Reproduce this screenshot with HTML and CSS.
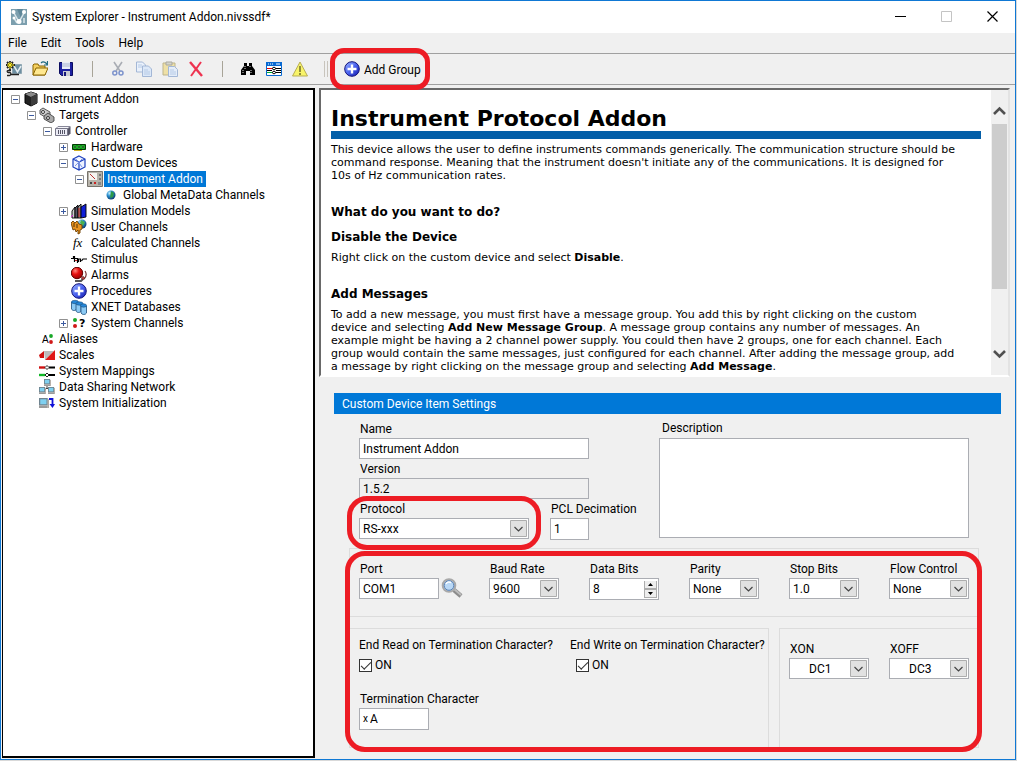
FILE: index.html
```html
<!DOCTYPE html>
<html lang="en">
<head>
<meta charset="utf-8">
<title>System Explorer</title>
<link rel="stylesheet" href="styles.css">
</head>
<body>
<svg class="defs" aria-hidden="true">
  <defs>
    <linearGradient id="gBlue" x1="0" y1="0" x2="1" y2="1"><stop offset="0" stop-color="#9db8ff"/><stop offset=".5" stop-color="#4a63f0"/><stop offset="1" stop-color="#1418a8"/></linearGradient>
    <radialGradient id="gRed" cx=".35" cy=".3" r=".8"><stop offset="0" stop-color="#ff8a80"/><stop offset=".4" stop-color="#e81010"/><stop offset="1" stop-color="#8a0000"/></radialGradient>
    <radialGradient id="gGlobe" cx=".35" cy=".3" r=".8"><stop offset="0" stop-color="#c8f4ff"/><stop offset=".4" stop-color="#2a8fd0"/><stop offset="1" stop-color="#06305c"/></radialGradient>
    <symbol id="plusball" viewBox="0 0 16 16"><circle cx="8" cy="8" r="7.3" fill="url(#gBlue)" stroke="#10107a"/><path d="M8 3.500v9M3.500 8h9" stroke="#fff" stroke-width="2.400"/></symbol>
    <symbol id="minus" viewBox="0 0 9 9"><path d="M.5.5h8v8h-8z" fill="#fff" stroke="#919191"/><path d="M2 4.500h5" stroke="#3c5aa0"/></symbol>
    <symbol id="plus" viewBox="0 0 9 9"><path d="M.5.5h8v8h-8z" fill="#fff" stroke="#919191"/><path d="M2 4.500h5M4.500 2v5" stroke="#3c5aa0"/></symbol>
    <symbol id="down" viewBox="0 0 17 17"><path d="M.5.5h16v16h-16z" fill="#e1e1e1" stroke="#adadad"/><path d="M4.500 7l4 4 4-4" fill="none" stroke="#444" stroke-width="1.200"/></symbol>
    <symbol id="pc" viewBox="0 0 8 8"><path d="M0 0h7v6H0z" fill="#6f8490"/><path d="M1 1h5v4H1z" fill="#7fd0f0"/><path d="M0 6h7v2H0z" fill="#9a9a9a"/><path d="M7 1h1v7H7z" fill="#b0a8a0"/></symbol>
  </defs>
</svg>

<main class="window">
  <header class="titlebar">
    <svg class="i16" viewBox="0 0 16 16"><path d="M0 0h16v16H0z" fill="#5f8799"/><path d="M0 0h6l4 9 2-9h4v16H0z" fill="#7c9fae"/><path d="M3 4l5 9 5-9M3 9l3 5M13 9v5" fill="none" stroke="#dbe7ec" stroke-width="1.500"/><g fill="#fff"><circle cx="2.500" cy="3" r="2"/><circle cx="13" cy="3" r="2"/><circle cx="8" cy="12.500" r="2.500"/><circle cx="3" cy="9" r="1.500"/></g></svg>
    <h1 class="title">System Explorer - Instrument Addon.nivssdf*</h1>
    <button class="wbtn" aria-label="Minimize"><svg viewBox="0 0 11 11"><path d="M0 5.500h11" stroke="#000"/></svg></button>
    <button class="wbtn" aria-label="Maximize" disabled><svg viewBox="0 0 11 11"><path d="M.5.5h10v10H.5z" fill="none" stroke="#c4c4c4"/></svg></button>
    <button class="wbtn" aria-label="Close"><svg viewBox="0 0 11 11"><path d="M.5.5l10 10M10.500.5l-10 10" stroke="#000" stroke-width="1.200"/></svg></button>
  </header>

  <nav class="menubar"><button>File</button><button>Edit</button><button>Tools</button><button>Help</button></nav>

  <div class="toolbar" role="toolbar">
    <button class="tool" aria-label="New"><svg class="i16" viewBox="0 0 16 16"><path d="M6.500 3.500h9v9h-9z" fill="#6d8fa2" stroke="#8fa6b2"/><path d="M8 5l3.500 6L15 5" fill="none" stroke="#e4edf2" stroke-width="1.500"/><path d="M4 0v9M0 4h9M1 1l6 6M7 1L1 7" stroke="#222" stroke-width="1.800"/><path d="M4 1v7M1 4h7M2 2l4 4M6 2L2 6" stroke="#ffee20"/><path d="M5 9.500H2.500c-2 0-1.500 2 0 2h1c2 0 1.500 3 0 3H1M5 13.500h8" fill="none" stroke="#222" stroke-width="1.300"/></svg></button>
    <button class="tool" aria-label="Open"><svg class="i16" viewBox="0 0 16 16"><path d="M1 14V4l1-1h4l1 2h6v9z" fill="#f5d060" stroke="#8a6500"/><path d="M1 14l3-7h12l-3 7z" fill="#ffe890" stroke="#8a6500"/><path d="M9 2c2-2 4-1 6 1M15.500 0v4H12" fill="none" stroke="#206a80" stroke-width="1.200"/></svg></button>
    <button class="tool" aria-label="Save"><svg class="i16" viewBox="0 0 16 16"><path d="M1.500 1.500h13v13h-11l-2-2z" fill="#1c20a0" stroke="#0b0c60"/><path d="M4 1h8v7H4z" fill="#e8ecf6"/><path d="M4 3h8M4 5h8" stroke="#a9b4d0"/><path d="M5 10h7v5H5z" fill="#c9ccd4"/><path d="M6 11h2v4H6z" fill="#16187a"/></svg></button>
    <span class="sep"></span>
    <button class="tool" aria-label="Cut" disabled><svg class="i16" viewBox="0 0 16 16"><path d="M4 1l6 9M12 1l-6 9" stroke="#a9adb4" stroke-width="1.600"/><circle cx="4.800" cy="12" r="2" fill="none" stroke="#7d93cc" stroke-width="1.500"/><circle cx="11" cy="12" r="2" fill="none" stroke="#7d93cc" stroke-width="1.500"/></svg></button>
    <button class="tool" aria-label="Copy" disabled><svg class="i16" viewBox="0 0 16 16"><g stroke="#a3b7d6"><path d="M.5 1h6l3 3v7h-9z" fill="#eaf1fb"/><path d="M6.500 5h6l3 3v7.500h-9z" fill="#dce8f8"/><path d="M2 4h4M2 6h4M8 9h4M8 11h6M8 13h6" stroke="#b6cae6"/></g></svg></button>
    <button class="tool" aria-label="Paste" disabled><svg class="i16" viewBox="0 0 16 16"><path d="M1 2h12v12H1z" fill="#eee0a6" stroke="#bdb48c"/><path d="M4 1h6v3H4z" fill="#d4d4cc" stroke="#a9a9a0"/><path d="M6.500 5.500h6l3 3v7h-9z" fill="#e4edf9" stroke="#a3b7d6"/><path d="M8 9h4M8 11h6M8 13h6" stroke="#b6cae6"/></svg></button>
    <button class="tool" aria-label="Delete"><svg class="i16" viewBox="0 0 16 16"><path d="M2 1l12 14" stroke="#ee3350" stroke-width="2.400"/><path d="M13 1L3 15" stroke="#ee3350" stroke-width="2"/></svg></button>
    <span class="sep"></span>
    <button class="tool" aria-label="Find"><svg class="i16" viewBox="0 0 16 16"><path d="M4 2h3v3h2V2h3v3l3 4v5h-5v-4H6v4H1V9l3-4z" fill="#000"/><path d="M3 9v4M5 5v3M11 9v4M10 5v2" stroke="#ddd" stroke-dasharray="1 1"/></svg></button>
    <button class="tool" aria-label="System mappings"><svg class="i16" viewBox="0 0 16 16"><path d="M0 1h16v14H0z" fill="#fff"/><path d="M.5 1.500h15v13H.5z" fill="none" stroke="#0869d2"/><path d="M0 1h16v4H0z" fill="#0869d2"/><path d="M2 3h1M4 3h1M6 3h1M10 3h4" stroke="#fff"/><path d="M1 7.500h5" stroke="#e00000"/><path d="M1 11.500h5" stroke="#00b030"/><path d="M1 9.500h5M10 7.500h5M10 9.500h5M10 11.500h5" stroke="#000"/><path d="M6 7.500l2-1.500 2 1.500L8 9zM6 11.500L8 10l2 1.500L8 13z" fill="#fff" stroke="#000"/></svg></button>
    <button class="tool" aria-label="Warnings"><svg class="i16" viewBox="0 0 16 16"><path d="M8 1l7.500 14H.5z" fill="#f8f46a" stroke="#b8ad55"/><path d="M8 5v6M8 12v2" stroke="#777330" stroke-width="1.600"/></svg></button>
    <span class="grip"></span>
    <button class="addgroup"><svg class="i16"><use href="#plusball"/></svg><span>Add Group</span></button>
  </div>

  <div class="body">
    <aside class="tree">
      <ul role="tree">
        <li class="l0"><svg class="ex"><use href="#minus"/></svg><svg class="i16" viewBox="0 0 16 16"><path d="M8 1l6 2v9l-6 3-6-3V3z" fill="#222" stroke="#000"/><path d="M2 3l6-2 6 2-6 3z" fill="#8a8a8a"/><path d="M8 6l6-3v9l-6 3z" fill="#3c3c3c"/></svg><span>Instrument Addon</span></li>
        <li class="l1"><svg class="ex"><use href="#minus"/></svg><svg class="i16" viewBox="0 0 16 16"><g stroke="#333" stroke-width=".8"><path d="M1 3l3-2 7 4v4l-3 2-7-4z" fill="#ccc"/><path d="M5 9l4-3 6 4v4l-3 2-7-4z" fill="#aaa"/></g><circle cx="4" cy="5" r="1.500" fill="#fff" stroke="#333"/><circle cx="9" cy="11" r="1.500" fill="#eee" stroke="#333"/></svg><span>Targets</span></li>
        <li class="l2"><svg class="ex"><use href="#minus"/></svg><svg class="i16" viewBox="0 0 16 16"><path d="M1 5.500l2-2h12l-2 2z" fill="#f4f4f8" stroke="#889"/><path d="M.5 5.500h12v7H.5z" fill="#ececf6" stroke="#778"/><path d="M13 5.500l2.500-2v7L13 13z" fill="#556"/><path d="M3.500 7v4M5.500 7v4M7.500 7v4M9.500 7v4" stroke="#556"/></svg><span>Controller</span></li>
        <li class="l3"><svg class="ex"><use href="#plus"/></svg><svg class="i16" viewBox="0 0 16 16"><path d="M1.500 5.500h13v5h-13z" fill="#0a9a14" stroke="#023804"/><path d="M3 7h2v2H3zM7 7h2v2H7zM11 7h2v2h-2z" fill="#000" stroke="#58d060" stroke-width=".6"/><path d="M3 11.500h8" stroke="#d0b020"/></svg><span>Hardware</span></li>
        <li class="l3"><svg class="ex"><use href="#minus"/></svg><svg class="i16" viewBox="0 0 16 16"><path d="M8 1l6 3v8l-6 3-6-3V4zM2 4l6 3 6-3M8 7v8" fill="#edf2ff" stroke="#1c3fbe" stroke-width="1.200"/><path d="M5 4l6 8M4 11l7-7" stroke="#7d97e8"/></svg><span>Custom Devices</span></li>
        <li class="l4"><svg class="ex"><use href="#minus"/></svg><svg class="i16" viewBox="0 0 16 16"><path d="M.5.5h15v15H.5z" fill="#b7b3aa" stroke="#77736c"/><path d="M2 2h8v7H2z" fill="#f4f4f0"/><path d="M3 3l5 5" stroke="#b33"/><path d="M12 3h2v2h-2zM12 7h2v2h-2z" fill="#777"/><path d="M3 11h2v2H3z" fill="#444"/><path d="M7 11h2v2H7z" fill="#c22"/><path d="M11 11h3v3h-3z" fill="#888"/></svg><span class="selected">Instrument Addon</span></li>
        <li class="l5"><svg class="i16" viewBox="0 0 16 16"><circle cx="8" cy="8" r="4.500" fill="url(#gGlobe)"/><path d="M8 4l3 2-1 4-3 1z" fill="#2c9a48"/></svg><span>Global MetaData Channels</span></li>
        <li class="l3"><svg class="ex"><use href="#plus"/></svg><svg class="i16" viewBox="0 0 16 16"><g stroke="#000" stroke-width=".9"><path d="M1 15V8l3-4v11z" fill="#ccc"/><path d="M4 15V5l3-3v13z" fill="#556"/><path d="M7 15V4l3-3v14z" fill="#999"/><path d="M10 15V4l5-3v13z" fill="#1020d8"/></g><path d="M8 5v9" stroke="#c81818"/><path d="M0 14l2-2" stroke="#e020e0"/></svg><span>Simulation Models</span></li>
        <li class="l3"><svg class="i16" viewBox="0 0 16 16"><circle cx="11" cy="5" r="4.500" fill="url(#gGlobe)"/><path d="M10 1l4 2-2 4-3-3z" fill="#48b050"/><path d="M0 4l2-2 2 2 2-2 2 3 3 1v4l-2 1v3l-2 1v-4l-2 2-1-3-2 1z" fill="#e89320" stroke="#6e4000" stroke-width=".9"/><path d="M3 4v4M6 5v4" stroke="#553000"/></svg><span>User Channels</span></li>
        <li class="l3"><svg class="i16" viewBox="0 0 16 16"><text class="fx" x="2" y="12">fx</text></svg><span>Calculated Channels</span></li>
        <li class="l3"><svg class="i16" viewBox="0 0 16 16"><path d="M0 7.500h2.500V5M3.500 5v6M4 7.500h2.500V12M7.500 11V8h2v3M10.500 10l1.500-2h4" fill="none" stroke="#000" stroke-width="1.200"/><path d="M4 9.500h2" stroke="#b22"/></svg><span>Stimulus</span></li>
        <li class="l3"><svg class="i16" viewBox="0 0 16 16"><circle cx="6" cy="6" r="5.700" fill="url(#gRed)" stroke="#600"/><path d="M4 14h6l2-2" stroke="#555" stroke-width="2" fill="none"/><path d="M14 4c2 3 2 5-1 8" fill="none" stroke="#733" stroke-width="1.200"/><circle cx="12" cy="11" r="1.500" fill="#c44" stroke="#422" stroke-width=".6"/></svg><span>Alarms</span></li>
        <li class="l3"><svg class="i16"><use href="#plusball"/></svg><span>Procedures</span></li>
        <li class="l3"><svg class="i16" viewBox="0 0 16 16"><g fill="#8ccaf4" stroke="#1e4f7c" stroke-width=".8"><path d="M.5 3v7c1 2 4 2 5 0V3z"/><path d="M5 5v7c1 2 4 2 5 0V5z"/><path d="M10 7v7c1 2 4.500 2 5.500 0V7z"/></g><g fill="#2386d8" stroke="#1e4f7c" stroke-width=".6"><ellipse cx="4" cy="3" rx="3.500" ry="1.700"/><ellipse cx="8.500" cy="4.500" rx="3.500" ry="1.700"/><ellipse cx="12.500" cy="6.500" rx="3" ry="1.700"/></g></svg><span>XNET Databases</span></li>
        <li class="l3"><svg class="ex"><use href="#plus"/></svg><svg class="i16" viewBox="0 0 16 16"><circle cx="4" cy="5" r="2" fill="#18a828"/><circle cx="4" cy="11" r="2" fill="#d01818"/><text class="qm" x="8" y="12">?</text></svg><span>System Channels</span></li>
        <li class="l1"><svg class="i16" viewBox="0 0 16 16"><text class="aa" x="3" y="12">A</text><circle cx="12" cy="5" r="1.900" fill="#18a828"/><circle cx="12" cy="11" r="1.900" fill="#d01818"/></svg><span>Aliases</span></li>
        <li class="l1"><svg class="i16" viewBox="0 0 16 16"><path d="M0 8l5-4v7H1z" fill="#d01010"/><path d="M5 4h10L6 13z" fill="#bbb"/><path d="M16 3v10H6z" fill="#e01818"/></svg><span>Scales</span></li>
        <li class="l1"><svg class="i16" viewBox="0 0 16 16"><path d="M0 4.500h6" stroke="#d01010" stroke-width="2.400"/><path d="M0 12h6" stroke="#10b828" stroke-width="2.400"/><path d="M10 4.500h6M10 12h6" stroke="#000" stroke-width="2"/><path d="M6 4.500l2-2 2 2-2 2zM6 12l2-2 2 2-2 2z" fill="#fff" stroke="#222"/></svg><span>System Mappings</span></li>
        <li class="l1"><svg class="i16" viewBox="0 0 16 16"><path d="M8 6v4M8 9l-3 3M8 9l3 3" fill="none" stroke="#444"/><use href="#pc" x="5" y="0" width="7" height="7"/><use href="#pc" x="0" y="8" width="7" height="7"/><use href="#pc" x="9" y="8" width="7" height="7"/></svg><span>Data Sharing Network</span></li>
        <li class="l1"><svg class="i16" viewBox="0 0 16 16"><use href="#pc" x="0" y="3" width="10" height="10"/><path d="M10 4h3.500v6" fill="none" stroke="#1010d8" stroke-width="1.800"/><path d="M10.500 9h5.500l-2.500 4z" fill="#1010d8"/></svg><span>System Initialization</span></li>
      </ul>
    </aside>

    <div class="content">
      <section class="help">
        <article class="doc">
          <h2 class="dochead">Instrument Protocol Addon</h2>
          <p>This device allows the user to define instruments commands generically. The communication structure should be command response. Meaning that the instrument doesn't initiate any of the communications. It is designed for 10s of Hz communication rates.</p>
          <h3>What do you want to do?</h3>
          <h4>Disable the Device</h4>
          <p>Right click on the custom device and select <b>Disable</b>.</p>
          <h4 class="later">Add Messages</h4>
          <p>To add a new message, you must first have a message group. You add this by right clicking on the custom<br>
          device and selecting <b>Add New Message Group</b>. A message group contains any number of messages. An<br>
          example might be having a 2 channel power supply. You could then have 2 groups, one for each channel. Each<br>
          group would contain the same messages, just configured for each channel. After adding the message group, add<br>
          a message by right clicking on the message group and selecting <b>Add Message</b>.</p>
        </article>
        <div class="scroll" aria-hidden="true">
          <svg viewBox="0 0 13 9"><path d="M1 8l5.500-5.500L12 8" fill="none" stroke="#505050" stroke-width="2.600"/></svg>
          <div class="track"><div class="thumb"></div></div>
          <svg viewBox="0 0 13 9"><path d="M1 1l5.500 5.500L12 1" fill="none" stroke="#505050" stroke-width="2.600"/></svg>
        </div>
      </section>

      <form class="settings">
        <h2 class="bar">Custom Device Item Settings</h2>
        <div class="general">
          <div class="ident">
            <label for="name">Name</label>
            <input id="name" value="Instrument Addon">
            <label for="version">Version</label>
            <input id="version" class="ro" value="1.5.2" readonly>
            <div class="protorow">
              <div class="field proto"><label for="proto">Protocol</label>
                <div class="sel"><select id="proto"><option>RS-xxx</option></select><svg><use href="#down"/></svg></div></div>
              <div class="field pcl"><label for="pcl">PCL Decimation</label><input id="pcl" class="tall" value="1"></div>
            </div>
          </div>
          <div class="desc"><label for="desc">Description</label><textarea id="desc"></textarea></div>
        </div>

        <div class="serial">
          <fieldset class="box line">
            <div class="field port"><label for="port">Port</label>
              <div class="portrow"><input id="port" value="COM1"><button type="button" class="browse" aria-label="Browse ports"><svg viewBox="0 0 22 20"><path d="M13 12l7 6" stroke="#8c8c8c" stroke-width="4.500"/><path d="M13 11l7 6" stroke="#bcbcbc" stroke-width="2"/><circle cx="8" cy="7.500" r="6.300" fill="#a9cbee" stroke="#a9a9a9" stroke-width="2"/><circle cx="8" cy="7.500" r="4.800" fill="#b9d8f6" stroke="#5d83b4"/><path d="M5 6c1-2 3-2.500 5-1.500" stroke="#fff" stroke-width="1.500" fill="none"/></svg></button></div></div>
            <div class="field"><label for="baud">Baud Rate</label><div class="sel"><select id="baud"><option>9600</option></select><svg><use href="#down"/></svg></div></div>
            <div class="field"><label for="bits">Data Bits</label><div class="spin"><input id="bits" class="tall" value="8"><svg viewBox="0 0 13 17"><path d="M0 0h13v17H0z" fill="#adadad"/><path d="M1 0h11v7H1zM1 9h11v7H1z" fill="#eee"/><path d="M4 5h5L6.500 2zM4 11h5l-2.500 3z" fill="#000"/></svg></div></div>
            <div class="field"><label for="parity">Parity</label><div class="sel"><select id="parity"><option>None</option></select><svg><use href="#down"/></svg></div></div>
            <div class="field"><label for="stop">Stop Bits</label><div class="sel"><select id="stop"><option>1.0</option></select><svg><use href="#down"/></svg></div></div>
            <div class="field flow"><label for="flow">Flow Control</label><div class="sel"><select id="flow"><option>None</option></select><svg><use href="#down"/></svg></div></div>
          </fieldset>
          <div class="lower">
            <fieldset class="box term">
              <div class="checks">
                <div><span id="rd">End Read on Termination Character?</span>
                  <label class="check"><input type="checkbox" checked aria-describedby="rd">ON</label></div>
                <div class="write"><span id="wr">End Write on Termination Character?</span>
                  <label class="check"><input type="checkbox" checked aria-describedby="wr">ON</label></div>
              </div>
              <div class="field tchar"><label for="tc">Termination Character</label><div class="hex"><small>x</small><input id="tc" value="A"></div></div>
            </fieldset>
            <fieldset class="box xon">
              <div class="field"><label for="xon">XON</label><div class="sel mid"><select id="xon"><option>DC1</option></select><svg><use href="#down"/></svg></div></div>
              <div class="field"><label for="xoff">XOFF</label><div class="sel mid"><select id="xoff"><option>DC3</option></select><svg><use href="#down"/></svg></div></div>
            </fieldset>
          </div>
        </div>
      </form>
    </div>
  </div>
</main>
</body>
</html>
```

FILE: styles.css
```css
* { box-sizing: border-box; }
body {
  margin: 0;
  padding: 0 1px 1px 0;
  height: 100vh;
  background: #d9d9d9;
  color: #000;
  font: 12px/16px Roboto, "Open Sans", sans-serif;
}
button, input, select, textarea { font: inherit; color: inherit; }
button { border: 0; padding: 0; background: none; }
h1, h2, h3, h4, p, ul, fieldset { margin: 0; padding: 0; }
.defs { position: absolute; width: 0; height: 0; }
.i16 { width: 16px; height: 16px; flex: none; display: block; }

.window {
  display: flex;
  flex-direction: column;
  height: 100%;
  border: 1px solid #0f78d4;
  background: #f0f0f0;
}
.titlebar {
  display: flex;
  align-items: center;
  height: 32px;
  padding-left: 10px;
  background: #fff;
}
.title { flex: 1; padding-left: 5px; font-size: 12px; font-weight: 400; }
.wbtn { width: 46px; height: 32px; display: grid; place-items: center; padding-bottom: 2px; }
.wbtn svg { width: 11px; height: 11px; }
.menubar { display: flex; gap: 14px; height: 20px; padding-left: 7px; }
.toolbar {
  display: flex;
  align-items: center;
  height: 32px;
  border-top: 1px solid #a0a0a0;
  border-bottom: 1px solid #a0a0a0;
}
.tool { width: 26px; height: 24px; display: grid; place-items: center; }
.sep { width: 26px; height: 16px; display: grid; place-items: center; }
.sep::after { content: ""; width: 1px; height: 16px; background: #a8a498; }
.grip { width: 4px; height: 16px; margin-left: 11px; border: solid #c8c4bc; border-width: 0 1px; }
.addgroup { position: relative; display: flex; align-items: center; gap: 4px; margin-left: 16px; }
.addgroup span { padding-top: 2px; }
.addgroup::after, .proto::after, .serial::after {
  content: "";
  position: absolute;
  border: 5px solid #ed1c24;
  border-radius: 14px;
  pointer-events: none;
  z-index: 2;
}
.addgroup::after { inset: -12px -9px -12px -14px; }

.body { flex: 1; min-height: 0; display: flex; padding: 3px 0 1px 1px; }
.tree {
  flex: 0 1 313px;
  border: 2px solid #000;
  border-width: 2px 2px 2px 1px;
  background: #fff;
  overflow: hidden;
}
.tree ul { list-style: none; padding-top: 1px; }
.tree li { display: flex; align-items: center; height: 16px; white-space: nowrap; }
.tree .ex { width: 9px; height: 9px; margin: 0 3px 0 -12px; flex: none; }
.tree span { padding: 0 3px 0 4px; line-height: 16px; }
.tree .selected { margin-left: 1px; padding: 0 3px; background: #0078d7; color: #fff; }
.l0 { padding-left: 20px; }
.l1 { padding-left: 36px; }
.l2 { padding-left: 52px; }
.l3 { padding-left: 68px; }
.l4 { padding-left: 84px; }
.l5 { padding-left: 100px; }
.fx { font: italic 13px "Liberation Serif", serif; }
.qm { font: bold 11px "DejaVu Sans", sans-serif; }
.aa { font: 10px "Liberation Sans", sans-serif; }

.content { flex: 1; min-width: 0; display: flex; flex-direction: column; padding-left: 4px; }
.help {
  flex: 1;
  min-height: 0;
  display: flex;
  margin-right: 5px;
  border: 2px solid;
  border-color: #696969 #e3e3e3 #fff #696969;
  background: #fff;
  overflow: hidden;
}
.doc { flex: 1; padding: 17px 10px 0; font: 11px/13px "DejaVu Sans", Verdana, sans-serif; }
.doc p { padding-right: 20px; }
.dochead { border-bottom: 8px solid #045fa8; margin-bottom: 4px; font-size: 22px; line-height: 24px; }
.doc h3 { margin-top: 22px; font-size: 12px; line-height: 17px; }
.doc h4 { margin: 8px 0 5px; font-size: 12px; line-height: 17px; }
.doc .later { margin-top: 22px; }
.scroll { width: 17px; display: flex; flex-direction: column; align-items: center; background: #f0f0f0; padding: 16px 0; }
.scroll svg { width: 13px; height: 9px; }
.track { flex: 1; width: 100%; padding: 9px 1px; }
.thumb { height: 76%; background: #cdcdcd; }

.settings { padding: 16px 14px 10px 15px; }
.bar { height: 21px; padding: 1px 8px 0; background: #0078d7; color: #fff; font-size: 12px; font-weight: 400; line-height: 20px; }
.general { display: flex; justify-content: space-between; padding: 5px 32px 8px 25px; }
.settings label, .settings .checks span { display: block; white-space: nowrap; }
.ident { width: 230px; }
.ident > label, .field > label { height: 19px; padding: 2px 1px 0; }
.settings input, .settings select, .settings textarea {
  display: block;
  width: 100%;
  height: 21px;
  margin: 0;
  padding: 0 3px;
  border: 1px solid #abadb3;
  border-radius: 0;
  background: #fff;
  outline: 0;
}
.settings input.ro { background: #f0f0f0; }
.settings input.tall { height: 22px; }
.protorow { display: flex; gap: 21px; }
.field { position: relative; width: 70px; }
.proto { width: 170px; }
.proto::after { inset: -3px -12px -10px -12px; border-radius: 20px; }
.pcl { width: 39px; }
.sel { display: grid; grid-template-columns: 1fr; align-items: center; }
.sel > * { grid-area: 1 / 1; }
.settings .sel select { appearance: none; padding: 0 20px 0 3px; }
.sel svg { width: 17px; height: 17px; margin-right: 2px; justify-self: end; pointer-events: none; }
.settings .mid select { padding-left: 19px; }
.desc { width: 310px; }
.desc label { height: 19px; padding: 1px 3px 0; }
.settings .desc textarea { height: 100px; resize: none; }

.serial { position: relative; margin: 0 22px 0 15px; }
.serial::after { inset: 3px -3px -4px -4px; border-radius: 20px; }
.box { min-width: 0; border: 1px solid #dcdcdc; }
.line { display: flex; justify-content: space-between; padding: 10px 9px 16px; }
.port { width: 100px; }
.portrow { display: flex; gap: 2px; }
.settings .portrow input { width: 80px; flex: none; }
.browse { width: 22px; height: 20px; flex: none; }
.browse svg { width: 22px; height: 20px; display: block; }
.flow { width: 80px; }
.spin, .hex { display: grid; align-items: center; }
.spin > *, .hex > * { grid-area: 1 / 1; }
.spin svg { width: 13px; height: 17px; margin-right: 2px; justify-self: end; }
.lower { display: flex; gap: 10px; margin-top: 11px; }
.term { flex: 1; padding: 8px 2px 17px 9px; }
.checks { display: grid; grid-template-columns: 211px auto; }
.settings .check { display: flex; align-items: center; gap: 3px; height: 16px; margin-top: 4px; }
.write .check { padding-left: 6px; }
.settings .check input {
  appearance: none;
  width: 13px;
  height: 13px;
  padding: 0;
  border-color: #333;
  display: grid;
  place-items: center;
}
.check input:checked::before { content: ""; width: 9px; height: 4px; border: solid #333; border-width: 0 0 1px 1px; rotate: -45deg; translate: 0 -1px; }
.tchar { margin-top: 16px; }
.hex small { z-index: 1; width: 10px; padding-left: 4px; font-size: 10px; line-height: 16px; }
.settings .hex input { height: 22px; padding-left: 10px; }
.xon { width: 200px; display: flex; justify-content: space-between; padding: 10px 9px; }
.xon .field { width: 80px; }
```
